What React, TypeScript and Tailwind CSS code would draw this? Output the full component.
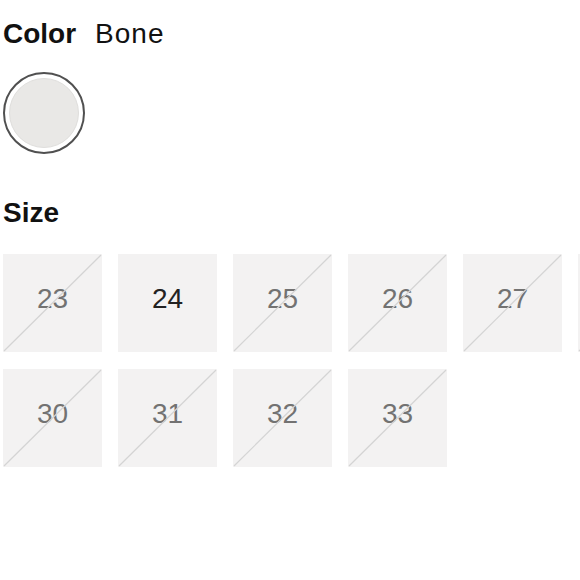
import React from "react";

const sizes: { label: string; available: boolean }[] = [
  { label: "23", available: false },
  { label: "24", available: true },
  { label: "25", available: false },
  { label: "26", available: false },
  { label: "27", available: false },
  { label: "28", available: false },
  { label: "30", available: false },
  { label: "31", available: false },
  { label: "32", available: false },
  { label: "33", available: false },
];

function Tile({ label, available }: { label: string; available: boolean }) {
  return (
    <div className="relative w-[99px] h-[98px] bg-[#f3f2f2] flex items-center justify-center pb-[9px]">
      <span
        className={
          "text-[28px] leading-none " +
          (available ? "text-[#222222]" : "text-[#727272]")
        }
      >
        {label}
      </span>
      {!available && (
        <svg
          className="absolute inset-0"
          width="99"
          height="98"
          viewBox="0 0 99 98"
        >
          <line x1="1" y1="97" x2="98" y2="1" stroke="#d4d4d4" strokeWidth="1.2" />
        </svg>
      )}
    </div>
  );
}

export default function App() {
  return (
    <div
      className="w-[580px] h-[580px] overflow-hidden bg-white"
      style={{ fontFamily: "'Liberation Sans', Arial, sans-serif" }}
    >
      <div className="pl-[3px] pt-[20px] w-[720px]">
        <div className="flex items-baseline text-[28px] leading-none text-[#111111]">
          <span className="font-bold">Color</span>
          <span className="ml-[19px] font-normal tracking-[1px]">Bone</span>
        </div>
        <div className="mt-[24px] w-[82px] h-[82px] rounded-full border-2 border-[#505050] flex items-center justify-center">
          <div className="w-[70px] h-[70px] rounded-full bg-[#e9e8e6] border border-[#dfdedc]" />
        </div>
        <div className="mt-[45px] text-[28px] leading-none font-bold text-[#111111]">
          Size
        </div>
        <div className="mt-[27px] flex w-[700px] gap-x-[16px]">
          {sizes.slice(0, 6).map((s) => (
            <Tile key={s.label} {...s} />
          ))}
        </div>
        <div className="mt-[17px] flex gap-x-[16px]">
          {sizes.slice(6).map((s) => (
            <Tile key={s.label} {...s} />
          ))}
        </div>
      </div>
    </div>
  );
}
